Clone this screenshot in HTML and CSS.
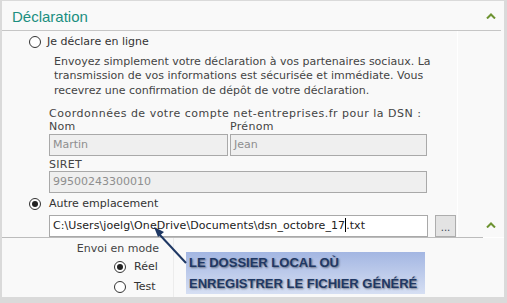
FILE: index.html
```html
<!DOCTYPE html>
<html>
	<head>
		<meta charset="utf-8">
		<link rel="stylesheet" href="styles.css">
		<title>Déclaration</title>
	</head>
	<body>
		<div class="frame">
			<div class="panel">
				<div class="head">
					<span class="title">Déclaration</span>
					<svg class="chev" width="10" height="6" viewBox="0 0 10 6"><path d="M1 5.5 L5 1.5 L9 5.5" fill="none" stroke="#6d9331" stroke-width="2"/></svg>
				</div>
				<div class="body">
					<div class="main">
						<div class="radio"><span class="dot"></span>Je déclare en ligne</div>
						<p class="intro">Envoyez simplement votre déclaration à vos partenaires sociaux. La<br>transmission de vos informations est sécurisée et immédiate. Vous<br>recevrez une confirmation de dépôt de votre déclaration.</p>
						<div class="fields">
							<div class="caption">Coordonnées de votre compte net-entreprises.fr pour la DSN :</div>
							<div class="pair">
								<div class="field nom">
									<div class="lbl">Nom</div>
									<div class="input off">Martin</div>
								</div>
								<div class="field prenom">
									<div class="lbl">Prénom</div>
									<div class="input off">Jean</div>
								</div>
							</div>
							<div class="lbl">SIRET</div>
							<div class="input off">99500243300010</div>
						</div>
						<div class="radio second"><span class="dot on"></span>Autre emplacement</div>
						<div class="filerow">
							<div class="input file">C:\Users\joelg\OneDrive\Documents\dsn_octobre_17<span class="caret"></span>.txt</div>
							<div class="browse">...</div>
						</div>
					</div>
					<div class="side">
						<svg class="chev" width="10" height="6" viewBox="0 0 10 6"><path d="M1 5.5 L5 1.5 L9 5.5" fill="none" stroke="#6d9331" stroke-width="2"/></svg>
					</div>
				</div>
				<div class="sepline">
					<div class="sep"></div>
					<div class="gap"></div>
				</div>
				<div class="lower">
					<div class="modecol">
						<div class="modelbl">Envoi en mode</div>
						<div class="radio small"><span class="dot on"></span>Réel</div>
						<div class="radio small"><span class="dot"></span>Test</div>
					</div>
				</div>
				<div class="callout">LE DOSSIER LOCAL OÙ<br>ENREGISTRER LE FICHIER GÉNÉRÉ</div>
				<svg class="arrow" width="505" height="302" viewBox="0 0 505 302">
					<line x1="186" y1="263" x2="159" y2="234" stroke="#1f3864" stroke-width="2"/>
					<path d="M154 227 L164 232 L158 237 Z" fill="#1f3864"/>
				</svg>
			</div>
		</div>
	</body>
</html>
```

FILE: styles.css
```css
body { margin:0; background:#dadada; font-family:"DejaVu Sans", sans-serif; font-size:11px; color:#3a3a3a; }
.frame { padding:1px 3px 6px 2px; height:296px; }
.panel { position:relative; background:#f9f9f9; height:296px; }

.head { height:29px; border-bottom:1px solid #c6c6c6; margin-right:3px; display:flex; align-items:center; justify-content:space-between; padding:0 5px 0 10px; }
.title { font-family:"Liberation Sans", sans-serif; font-size:15px; color:#1b8f80; margin-top:1px; }
.chev { display:block; }

.body { display:flex; height:206px; }
.main { width:455px; border-right:1px solid #fff; overflow:hidden; }
.side { flex:1; display:flex; justify-content:flex-end; align-items:flex-end; padding-bottom:9px; padding-right:8px; }

.radio { display:flex; align-items:center; height:18px; line-height:18px; margin-left:27px; color:#333; }
.radio.second { margin-top:1px; }
.dot { width:10px; height:10px; border:1px solid #333; border-radius:50%; background:#fff; margin-right:6px; position:relative; }
.second .dot, .small .dot { margin-right:8px; }
.dot.on::after { content:""; position:absolute; left:2px; top:2px; width:6px; height:6px; border-radius:50%; background:#222; }
.main > .radio:first-child { margin-top:2px; }

.intro { margin:3.5px 0 0 52px; line-height:14.5px; color:#444; }

.fields { margin:9px 0 0 47px; width:378px; }
.caption { line-height:13px; letter-spacing:0.5px; color:#444; }
.lbl { line-height:13px; letter-spacing:0.3px; color:#444; }
.pair { display:flex; gap:2px; }
.nom { width:179px; }
.prenom { width:197px; }
.pair .lbl { margin-bottom:1px; }
.input { height:20px; line-height:20px; border:1px solid #a9a9a9; padding-left:3px; white-space:nowrap; overflow:hidden; }
.input.off { background:#efefef; color:#8e8e8e; margin-bottom:2px; }

.filerow { display:flex; margin:2px 0 0 47px; }
.input.file { width:374px; background:#fff; color:#222; letter-spacing:0.08px; }
.caret { display:inline-block; width:1px; height:14px; background:#000; vertical-align:-3px; }
.browse { width:19px; height:20px; margin-left:7px; border:1px solid #adadad; background:#e3e3e3; font-size:10px; line-height:24px; text-align:center; color:#345; }

.sepline { display:flex; height:1px; }
.sep { width:481px; background:#bcbcbc; }
.gap { flex:1; background:#fff; }

.lower { height:59px; display:flex; }
.modecol { width:171px; border-right:1px solid #ececec; }
.modelbl { text-align:right; padding-right:14px; line-height:16px; margin-top:3px; color:#444; }
.radio.small { margin-left:112px; height:20px; line-height:20px; }

.callout { position:absolute; left:184px; top:251px; width:236px; height:42px; padding-left:3px; background:linear-gradient(#a3b6e2, #d6dff3); font-family:"Liberation Sans Narrow", "Liberation Sans", sans-serif; font-weight:bold; font-size:13px; line-height:21px; color:#1f3864; text-shadow:1px 1px 2px rgba(0,0,0,.45); white-space:nowrap; }
.arrow { position:absolute; left:-2px; top:-1px; pointer-events:none; }
```
